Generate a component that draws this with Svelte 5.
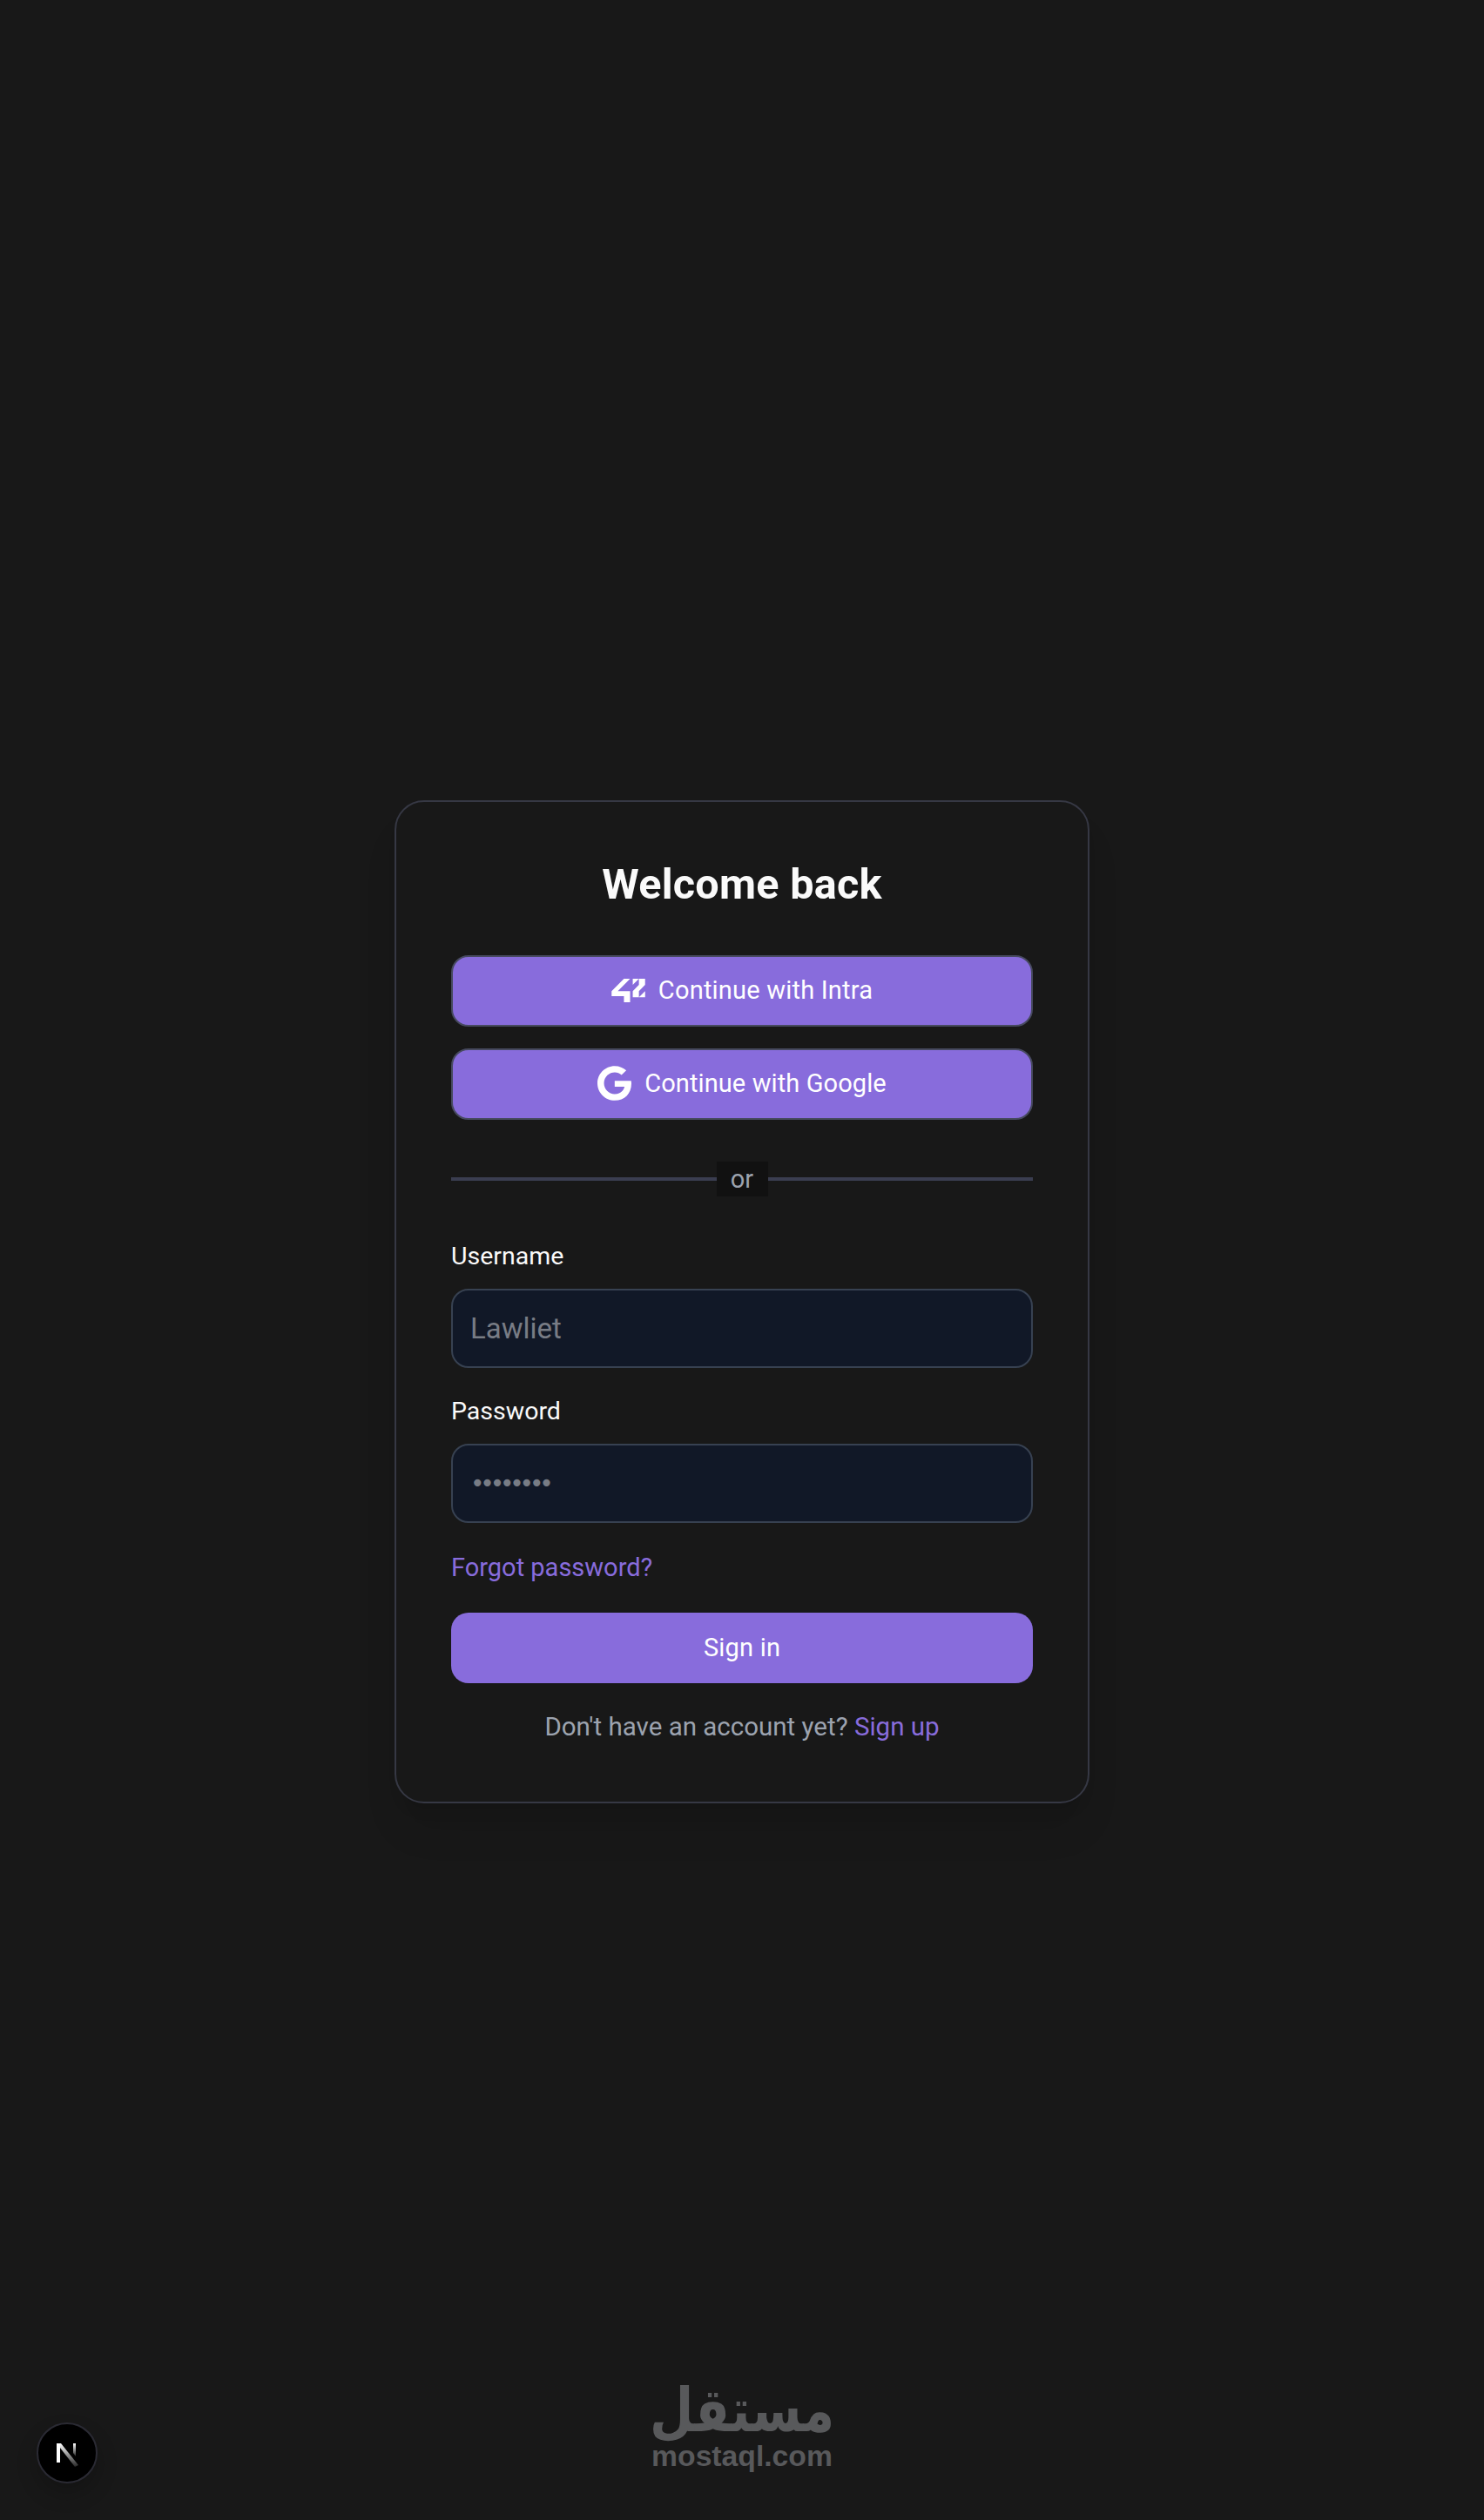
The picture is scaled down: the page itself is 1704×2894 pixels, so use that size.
<script lang="ts">
  let username = $state('');
  let password = $state('');
</script>

<main class="page">
  <section class="card">
    <h1>Welcome back</h1>

    <div class="providers">
      <button class="btn provider" type="button">
        <svg class="logo-42" viewBox="32 -51.1 896 629.1" aria-hidden="true">
          <polygon points="32,412.6 362.1,412.6 362.1,578 526.8,578 526.8,279.1 197.3,279.1 526.8,-51.1 362.1,-51.1 32,279.1" />
          <polygon points="597.9,114.2 762.7,-51.1 597.9,-51.1" />
          <polygon points="762.7,114.2 597.9,279.1 597.9,443.9 762.7,443.9 762.7,279.1 928,114.2 928,-51.1 762.7,-51.1" />
          <polygon points="928,279.1 762.7,443.9 928,443.9" />
        </svg>
        Continue with Intra
      </button>
      <button class="btn provider google" type="button">
        <svg class="logo-g" viewBox="0 8 488 496" aria-hidden="true">
          <path d="M488 261.8C488 403.3 391.1 504 248 504 110.8 504 0 393.2 0 256S110.8 8 248 8c66.8 0 123 24.5 166.3 64.9l-67.5 64.9C258.5 52.6 94.3 116.6 94.3 256c0 86.5 69.1 156.6 153.7 156.6 98.2 0 135-70.4 140.8-106.9H248v-85.3h236.1c2.3 12.7 3.9 24.9 3.9 41.4z" />
        </svg>
        Continue with Google
      </button>
    </div>

    <div class="divider"><span>or</span></div>

    <form class="form" onsubmit={(e) => e.preventDefault()}>
      <label class="field">
        <span class="label">Username</span>
        <input type="text" placeholder="Lawliet" bind:value={username} />
      </label>
      <label class="field second">
        <span class="label">Password</span>
        <input class="pass" type="text" placeholder="••••••••" bind:value={password} />
      </label>
      <a class="link forgot" href="#forgot">Forgot password?</a>
      <button class="btn submit" type="submit">Sign in</button>
    </form>

    <p class="signup">Don't have an account yet? <a class="link" href="#signup">Sign up</a></p>
  </section>

  <div class="watermark">
    <span class="ar" dir="rtl">مستقل</span>
    <span class="en">mostaql.com</span>
  </div>

  <div class="next-badge">
    <svg viewBox="0 0 70 70" aria-hidden="true">
      <defs>
        <linearGradient id="n-fade" x1="0" y1="0" x2="0" y2="1">
          <stop offset="0" stop-color="#fff" />
          <stop offset="1" stop-color="#fff" stop-opacity="0.15" />
        </linearGradient>
      </defs>
      <circle cx="35" cy="35" r="34" fill="#000" stroke="#2a2a33" stroke-width="2" />
      <path d="M23 24h4v22h-4z" fill="#fff" />
      <path d="M23 24h5l20 25-4 2z" fill="url(#n-fade)" />
      <path d="M42 24h3v15l-3-4z" fill="url(#n-fade)" />
    </svg>
  </div>
</main>

<style>
  :global(body) {
    margin: 0;
    background: #181818;
  }

  .page {
    position: relative;
    box-sizing: border-box;
    height: 2894px;
    padding-top: 919px;
    display: flex;
    flex-direction: column;
    align-items: center;
    background: #181818;
    font-family: Roboto, "Noto Sans", sans-serif;
    color: #fafafa;
  }

  .card {
    box-sizing: border-box;
    width: 798px;
    height: 1152px;
    padding: 64px 63px 0;
    border: 2px solid #363844;
    border-radius: 34px;
    background: #181818;
    box-shadow: 0 36px 46px -9px rgba(0, 0, 0, 0.1), 0 15px 18px -10px rgba(0, 0, 0, 0.1);
  }

  h1 {
    margin: 0 0 50px;
    height: 62px;
    font-size: 48.5px;
    line-height: 62px;
    font-weight: 700;
    text-align: center;
    letter-spacing: 0.3px;
  }

  .providers {
    display: flex;
    flex-direction: column;
    gap: 25px;
  }

  .btn {
    display: flex;
    align-items: center;
    justify-content: center;
    width: 100%;
    padding: 0 0 2px;
    border-radius: 20px;
    background: #886cdc;
    color: #fff;
    font: 400 29px Roboto, "Noto Sans", sans-serif;
    letter-spacing: 0.2px;
    cursor: pointer;
  }

  .provider {
    box-sizing: border-box;
    height: 82px;
    gap: 15px;
    border: 2px solid #474a60;
  }

  .google {
    letter-spacing: 0.1px;
  }

  .logo-42 {
    width: 39px;
    height: 27px;
    fill: #fff;
  }

  .logo-g {
    width: 39px;
    height: 40px;
    fill: #fff;
  }

  .divider {
    display: flex;
    align-items: center;
    justify-content: center;
    height: 40px;
    margin: 48px 0 0;
    background: linear-gradient(#3a3d50, #3a3d50) center / 100% 4px no-repeat;
  }

  .divider span {
    box-sizing: border-box;
    width: 59px;
    height: 40px;
    background: #111;
    color: #9ca3af;
    font-size: 29px;
    line-height: 40px;
    text-align: center;
  }

  .form {
    display: flex;
    flex-direction: column;
    margin-top: 49px;
  }

  .field {
    display: flex;
    flex-direction: column;
    gap: 17px;
  }

  .second {
    margin-top: 30px;
  }

  .label {
    height: 40px;
    font-size: 28.5px;
    line-height: 40px;
    color: #fafafa;
  }

  input {
    box-sizing: border-box;
    width: 100%;
    height: 91px;
    padding: 0 20px;
    border: 2px solid #374151;
    border-radius: 20px;
    background: #111827;
    color: #fafafa;
    font: 400 33px Roboto, "Noto Sans", sans-serif;
    outline: none;
  }

  input::placeholder {
    color: #787c85;
    opacity: 1;
  }

  .pass {
    font-family: "DejaVu Sans", sans-serif;
    font-size: 28px;
    letter-spacing: -5.2px;
  }

  .link {
    color: #886cdc;
    text-decoration: none;
  }

  .forgot {
    margin-top: 31px;
    height: 40px;
    font-size: 29px;
    line-height: 40px;
  }

  .submit {
    height: 81px;
    margin-top: 32px;
    border: none;
  }

  .signup {
    margin: 30px 0 0;
    color: #9ca3af;
    font-size: 29.5px;
    line-height: 40px;
    text-align: center;
  }

  .watermark {
    position: absolute;
    left: 0;
    right: 0;
    top: 2743px;
    display: flex;
    flex-direction: column;
    align-items: center;
    color: #58595b;
  }

  .ar {
    height: 50px;
    margin-bottom: 12px;
    font: 700 58px/50px "DejaVu Sans", sans-serif;
    transform: scaleY(1.2);
  }

  .en {
    font: 700 33.7px/30px "Liberation Sans", sans-serif;
  }

  .next-badge {
    position: absolute;
    left: 42px;
    top: 2782px;
    width: 70px;
    height: 70px;
    border-radius: 50%;
    box-shadow: 0 12px 24px rgba(0, 0, 0, 0.2);
  }

  .next-badge svg {
    display: block;
  }
</style>
